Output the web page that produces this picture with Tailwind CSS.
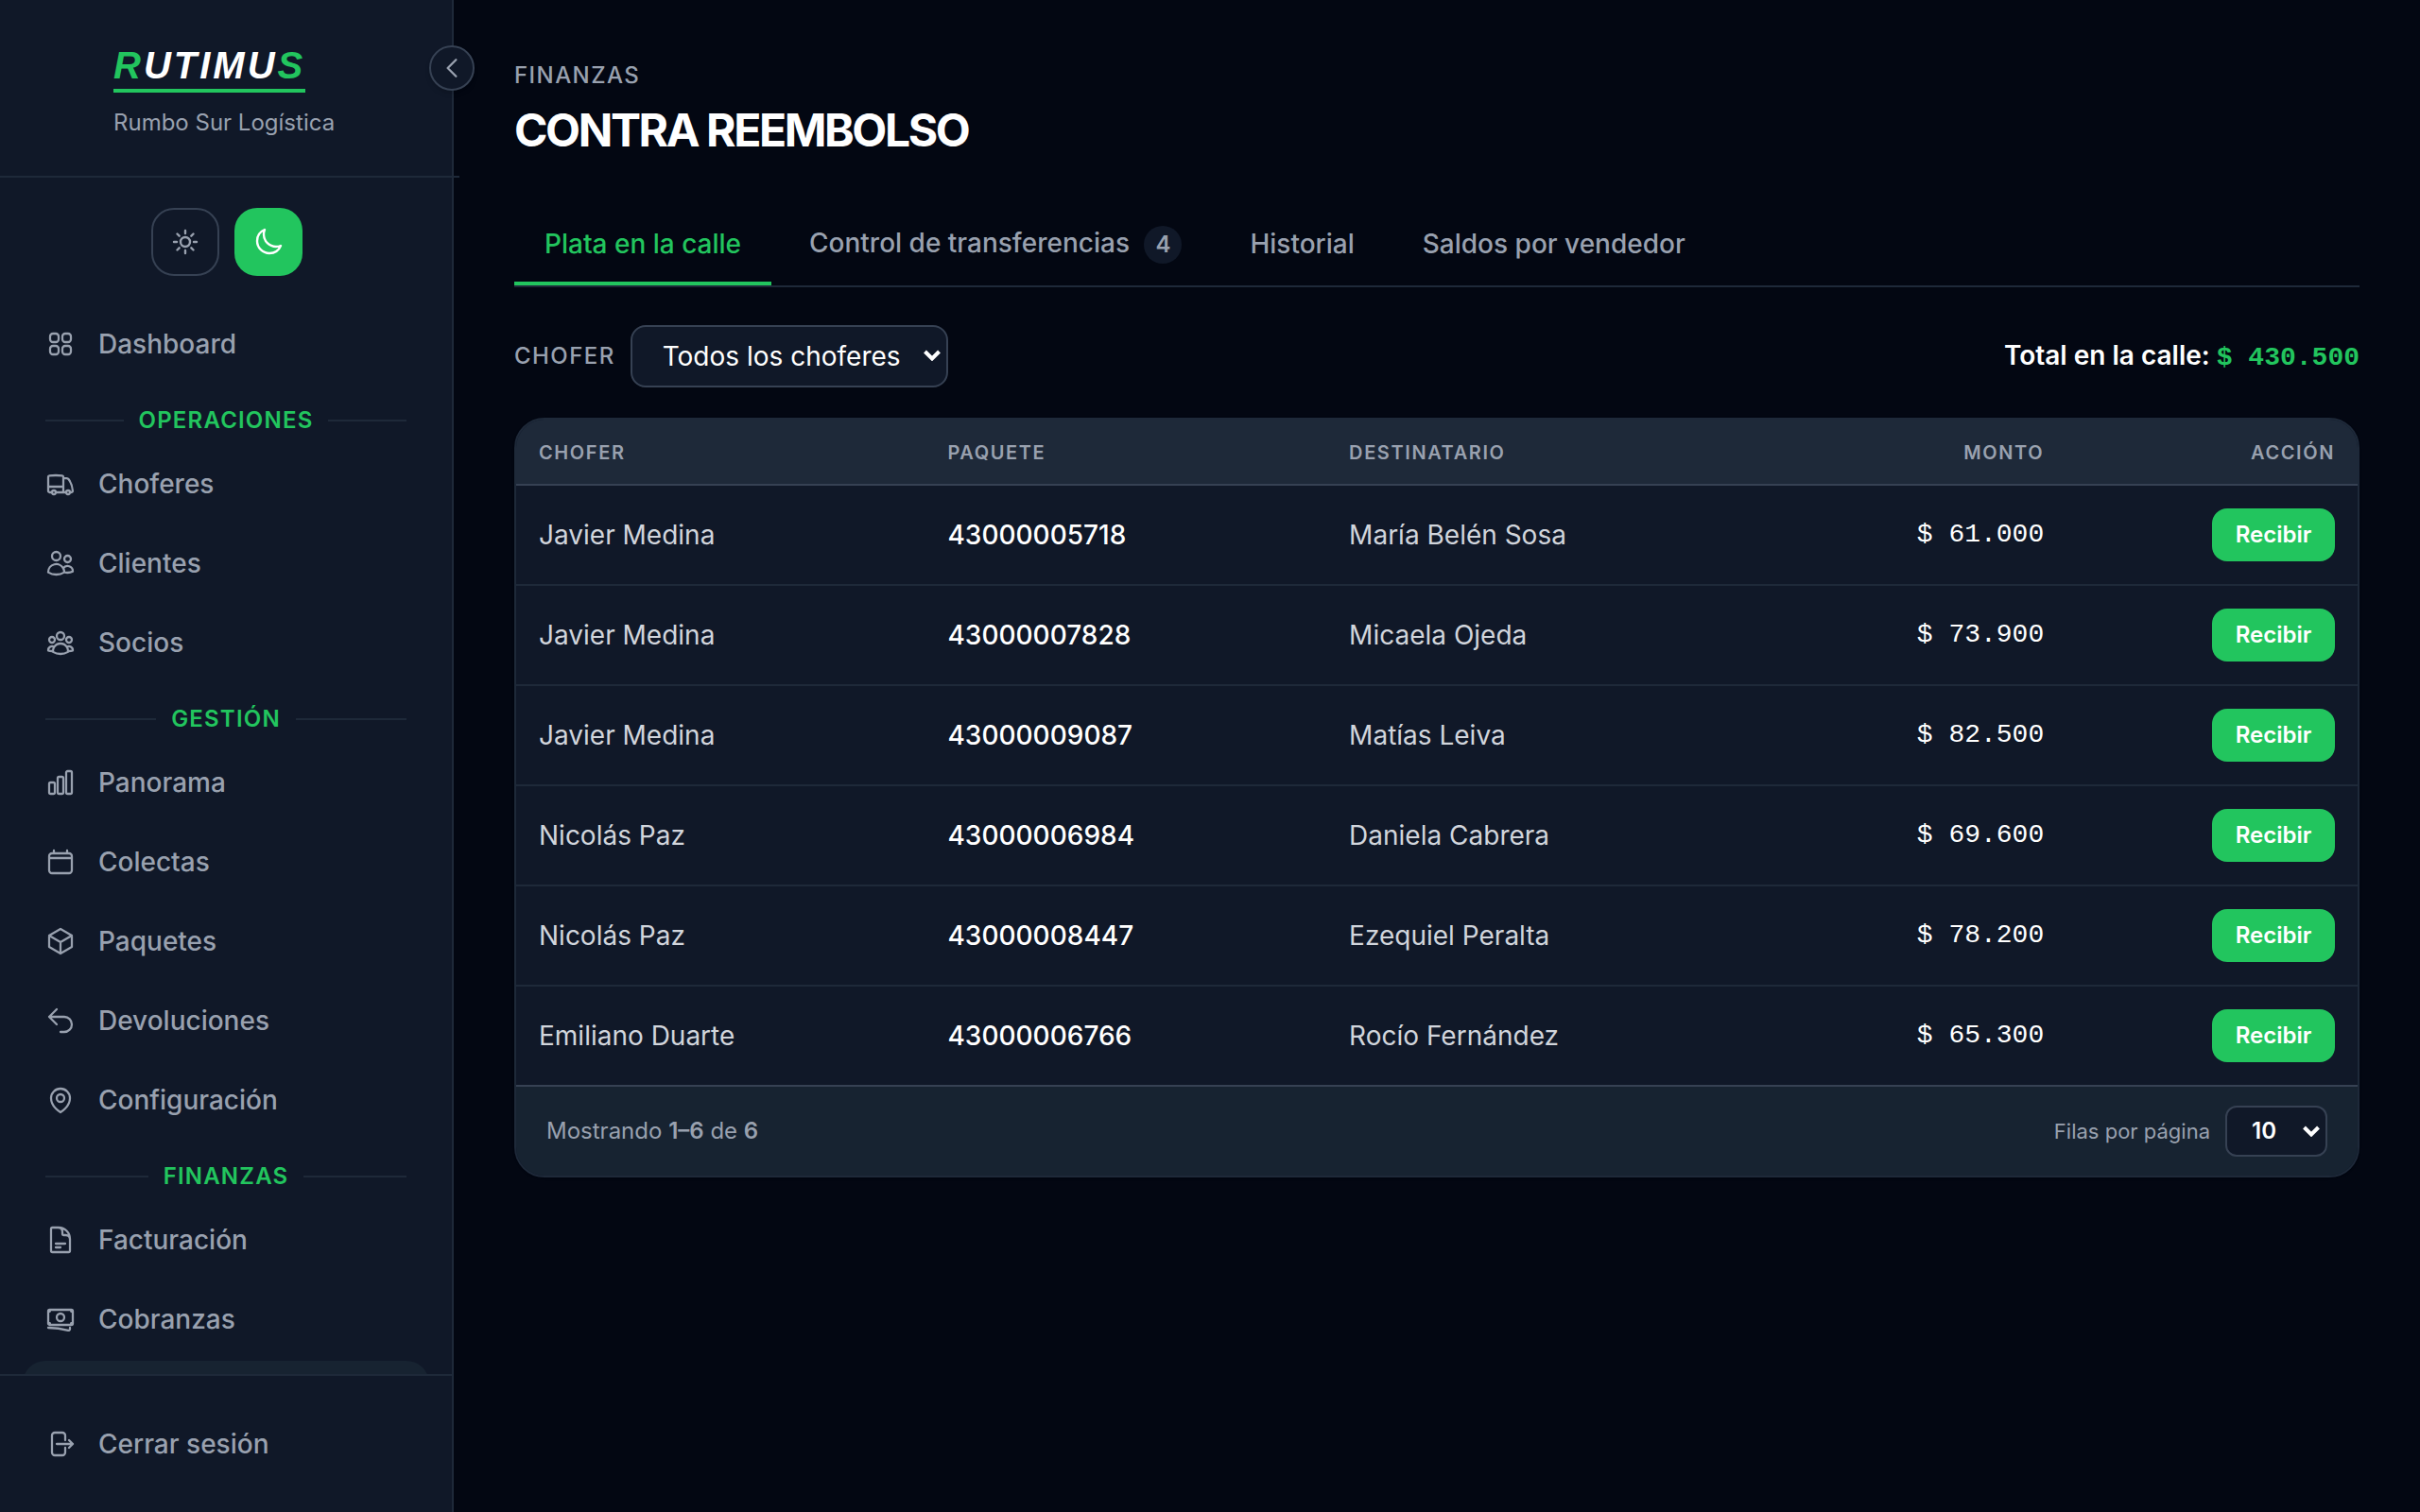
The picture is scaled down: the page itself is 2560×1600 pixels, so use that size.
<!DOCTYPE html>
<html lang="es">
<head>
  <meta charset="UTF-8">
  <meta name="viewport" content="width=device-width, initial-scale=1.0">
  <title>Rutimus - Contra reembolso</title>
  <script src="https://cdn.jsdelivr.net/npm/@tailwindcss/browser@4"></script>
</head>
<body class="flex h-screen overflow-hidden bg-gray-950 font-['Inter',sans-serif] text-[28px] leading-[40px] text-white">

  <!-- Sidebar -->
  <aside class="relative z-10 flex w-[480px] shrink-0 flex-col border-r-2 border-gray-800 bg-gray-900 text-gray-400">
    <div class="-mr-2 flex h-[188px] shrink-0 border-b-2 border-gray-800 pt-[46px] pl-30">
      <div class="flex flex-col items-start">
        <span class="border-b-4 border-[#22c55e] pb-[2px] font-['Liberation_Sans',sans-serif] text-[40px] leading-[46px] font-bold tracking-[3px] text-white italic"><span class="text-[#22c55e]">R</span>UTIMU<span class="text-[#22c55e]">S</span></span>
        <span class="mt-4 text-2xl leading-8">Rumbo Sur Logística</span>
      </div>
    </div>
    <button aria-label="Contraer menú" class="absolute top-12 -right-6 flex size-12 items-center justify-center rounded-full border-2 border-gray-700 bg-gray-900 shadow-md">
      <svg class="size-7" viewBox="0 0 24 24" fill="none" stroke="currentColor" stroke-width="2" stroke-linecap="round" stroke-linejoin="round"><path d="M15.75 19.5 8.25 12l7.5-7.5"/></svg>
    </button>

    <!-- Tema -->
    <div class="-mr-[2px] flex shrink-0 justify-center gap-4 pt-8 pb-4">
      <button aria-label="Tema claro" class="flex size-[72px] items-center justify-center rounded-3xl border-2 border-gray-700">
        <svg class="size-8" viewBox="0 0 24 24" fill="none" stroke="currentColor" stroke-width="1.8" stroke-linecap="round" stroke-linejoin="round"><path d="M12 3v2.25m6.364.386-1.591 1.591M21 12h-2.25m-.386 6.364-1.591-1.591M12 18.75V21m-4.773-4.227-1.591 1.591M5.25 12H3m4.227-4.773L5.636 5.636M15.75 12a3.75 3.75 0 1 1-7.5 0 3.75 3.75 0 0 1 7.5 0Z"/></svg>
      </button>
      <button aria-label="Tema oscuro" class="flex size-[72px] items-center justify-center rounded-3xl bg-[#22c55e] text-white">
        <svg class="size-8" viewBox="0 0 24 24" fill="none" stroke="currentColor" stroke-width="1.8" stroke-linecap="round" stroke-linejoin="round"><path d="M21.752 15.002A9.72 9.72 0 0 1 18 15.75c-5.385 0-9.75-4.365-9.75-9.75 0-1.33.266-2.597.748-3.752A9.753 9.753 0 0 0 3 11.25C3 16.635 7.365 21 12.75 21a9.753 9.753 0 0 0 9.002-5.998Z"/></svg>
      </button>
    </div>

    <nav class="flex min-h-0 flex-1 flex-col gap-1 overflow-hidden px-6 pt-4 font-medium">
      <a href="#" class="flex h-20 shrink-0 items-center gap-6 rounded-3xl px-6">
        <svg class="size-8" viewBox="0 0 24 24" fill="none" stroke="currentColor" stroke-width="1.7" stroke-linecap="round" stroke-linejoin="round"><path d="M3.75 6A2.25 2.25 0 0 1 6 3.75h2.25A2.25 2.25 0 0 1 10.5 6v2.25a2.25 2.25 0 0 1-2.25 2.25H6a2.25 2.25 0 0 1-2.25-2.25V6ZM3.75 15.75A2.25 2.25 0 0 1 6 13.5h2.25a2.25 2.25 0 0 1 2.25 2.25V18a2.25 2.25 0 0 1-2.25 2.25H6A2.25 2.25 0 0 1 3.75 18v-2.25ZM13.5 6a2.25 2.25 0 0 1 2.25-2.25H18A2.25 2.25 0 0 1 20.25 6v2.25A2.25 2.25 0 0 1 18 10.5h-2.25a2.25 2.25 0 0 1-2.25-2.25V6ZM13.5 15.75a2.25 2.25 0 0 1 2.25-2.25H18a2.25 2.25 0 0 1 2.25 2.25V18A2.25 2.25 0 0 1 18 20.25h-2.25A2.25 2.25 0 0 1 13.5 18v-2.25Z"/></svg>
        Dashboard
      </a>

      <div class="flex shrink-0 items-center gap-4 px-6 pt-5 pb-[6px] text-2xl leading-[34px] font-semibold tracking-wider text-[#22c55e]">
        <span class="h-[2px] flex-1 bg-gray-800"></span>OPERACIONES<span class="h-[2px] flex-1 bg-gray-800"></span>
      </div>
      <a href="#" class="flex h-20 shrink-0 items-center gap-6 rounded-3xl px-6">
        <svg class="size-8" viewBox="0 0 24 24" fill="none" stroke="currentColor" stroke-width="1.7" stroke-linecap="round" stroke-linejoin="round"><path d="M8.25 18.75a1.5 1.5 0 0 1-3 0m3 0a1.5 1.5 0 0 0-3 0m3 0h6m-9 0H3.375a1.125 1.125 0 0 1-1.125-1.125V14.25m17.25 4.5a1.5 1.5 0 0 1-3 0m3 0a1.5 1.5 0 0 0-3 0m3 0h1.125c.621 0 1.129-.504 1.09-1.124a17.902 17.902 0 0 0-3.213-9.193 2.056 2.056 0 0 0-1.58-.86H14.25M16.5 18.75h-2.25m0-11.177v-.958c0-.568-.422-1.048-.987-1.106a48.554 48.554 0 0 0-10.026 0 1.106 1.106 0 0 0-.987 1.106v7.635m12-6.677v6.677m0 4.5v-4.5m0 0h-12"/></svg>
        Choferes
      </a>
      <a href="#" class="flex h-20 shrink-0 items-center gap-6 rounded-3xl px-6">
        <svg class="size-8" viewBox="0 0 24 24" fill="none" stroke="currentColor" stroke-width="1.7" stroke-linecap="round" stroke-linejoin="round"><path d="M15 19.128a9.38 9.38 0 0 0 2.625.372 9.337 9.337 0 0 0 4.121-.952 4.125 4.125 0 0 0-7.533-2.493M15 19.128v-.003c0-1.113-.285-2.16-.786-3.07M15 19.128v.106A12.318 12.318 0 0 1 8.624 21c-2.331 0-4.512-.645-6.374-1.766l-.001-.109a6.375 6.375 0 0 1 11.964-3.07M12 6.375a3.375 3.375 0 1 1-6.75 0 3.375 3.375 0 0 1 6.75 0Zm8.25 2.25a2.625 2.625 0 1 1-5.25 0 2.625 2.625 0 0 1 5.25 0Z"/></svg>
        Clientes
      </a>
      <a href="#" class="flex h-20 shrink-0 items-center gap-6 rounded-3xl px-6">
        <svg class="size-8" viewBox="0 0 24 24" fill="none" stroke="currentColor" stroke-width="1.7" stroke-linecap="round" stroke-linejoin="round"><path d="M18 18.72a9.094 9.094 0 0 0 3.741-.479 3 3 0 0 0-4.682-2.72m.94 3.198.001.031c0 .225-.012.447-.037.666A11.944 11.944 0 0 1 12 21c-2.17 0-4.207-.576-5.963-1.584A6.062 6.062 0 0 1 6 18.719m12 0a5.971 5.971 0 0 0-.941-3.197m0 0A5.995 5.995 0 0 0 12 12.75a5.995 5.995 0 0 0-5.058 2.772m0 0a3 3 0 0 0-4.681 2.72 8.986 8.986 0 0 0 3.74.477m.94-3.197a5.971 5.971 0 0 0-.94 3.197M15 6.75a3 3 0 1 1-6 0 3 3 0 0 1 6 0Zm6 3a2.25 2.25 0 1 1-4.5 0 2.25 2.25 0 0 1 4.5 0Zm-13.5 0a2.25 2.25 0 1 1-4.5 0 2.25 2.25 0 0 1 4.5 0Z"/></svg>
        Socios
      </a>

      <div class="flex shrink-0 items-center gap-4 px-6 pt-5 pb-[6px] text-2xl leading-[34px] font-semibold tracking-wider text-[#22c55e]">
        <span class="h-[2px] flex-1 bg-gray-800"></span>GESTIÓN<span class="h-[2px] flex-1 bg-gray-800"></span>
      </div>
      <a href="#" class="flex h-20 shrink-0 items-center gap-6 rounded-3xl px-6">
        <svg class="size-8" viewBox="0 0 24 24" fill="none" stroke="currentColor" stroke-width="1.7" stroke-linecap="round" stroke-linejoin="round"><path d="M3 13.125C3 12.504 3.504 12 4.125 12h2.25c.621 0 1.125.504 1.125 1.125v6.75C7.5 20.496 6.996 21 6.375 21h-2.25A1.125 1.125 0 0 1 3 19.875v-6.75ZM9.75 8.625c0-.621.504-1.125 1.125-1.125h2.25c.621 0 1.125.504 1.125 1.125v11.25c0 .621-.504 1.125-1.125 1.125h-2.25a1.125 1.125 0 0 1-1.125-1.125V8.625ZM16.5 4.125c0-.621.504-1.125 1.125-1.125h2.25C20.496 3 21 3.504 21 4.125v15.75c0 .621-.504 1.125-1.125 1.125h-2.25a1.125 1.125 0 0 1-1.125-1.125V4.125Z"/></svg>
        Panorama
      </a>
      <a href="#" class="flex h-20 shrink-0 items-center gap-6 rounded-3xl px-6">
        <svg class="size-8" viewBox="0 0 24 24" fill="none" stroke="currentColor" stroke-width="1.7" stroke-linecap="round" stroke-linejoin="round"><path d="M6.75 3v2.25M17.25 3v2.25M3 18.75V7.5a2.25 2.25 0 0 1 2.25-2.25h13.5A2.25 2.25 0 0 1 21 7.5v11.25m-18 0A2.25 2.25 0 0 0 5.25 21h13.5A2.25 2.25 0 0 0 21 18.75m-18 0V9h18v9.75"/></svg>
        Colectas
      </a>
      <a href="#" class="flex h-20 shrink-0 items-center gap-6 rounded-3xl px-6">
        <svg class="size-8" viewBox="0 0 24 24" fill="none" stroke="currentColor" stroke-width="1.7" stroke-linecap="round" stroke-linejoin="round"><path d="m21 7.5-9-5.25L3 7.5m18 0-9 5.25m9-5.25v9l-9 5.25M3 7.5l9 5.25M3 7.5v9l9 5.25m0-9v9"/></svg>
        Paquetes
      </a>
      <a href="#" class="flex h-20 shrink-0 items-center gap-6 rounded-3xl px-6">
        <svg class="size-8" viewBox="0 0 24 24" fill="none" stroke="currentColor" stroke-width="1.7" stroke-linecap="round" stroke-linejoin="round"><path d="M9 15 3 9m0 0 6-6M3 9h12a6 6 0 0 1 0 12h-3"/></svg>
        Devoluciones
      </a>
      <a href="#" class="flex h-20 shrink-0 items-center gap-6 rounded-3xl px-6">
        <svg class="size-8" viewBox="0 0 24 24" fill="none" stroke="currentColor" stroke-width="1.7" stroke-linecap="round" stroke-linejoin="round"><path d="M15 10.5a3 3 0 1 1-6 0 3 3 0 0 1 6 0Z"/><path d="M19.5 10.5c0 7.142-7.5 11.25-7.5 11.25S4.5 17.642 4.5 10.5a7.5 7.5 0 1 1 15 0Z"/></svg>
        Configuración
      </a>

      <div class="flex shrink-0 items-center gap-4 px-6 pt-5 pb-[6px] text-2xl leading-[34px] font-semibold tracking-wider text-[#22c55e]">
        <span class="h-[2px] flex-1 bg-gray-800"></span>FINANZAS<span class="h-[2px] flex-1 bg-gray-800"></span>
      </div>
      <a href="#" class="flex h-20 shrink-0 items-center gap-6 rounded-3xl px-6">
        <svg class="size-8" viewBox="0 0 24 24" fill="none" stroke="currentColor" stroke-width="1.7" stroke-linecap="round" stroke-linejoin="round"><path d="M19.5 14.25v-2.625a3.375 3.375 0 0 0-3.375-3.375h-1.5A1.125 1.125 0 0 1 13.5 7.125v-1.5a3.375 3.375 0 0 0-3.375-3.375H8.25m0 12.75h7.5m-7.5 3H12M10.5 2.25H5.625c-.621 0-1.125.504-1.125 1.125v17.25c0 .621.504 1.125 1.125 1.125h12.75c.621 0 1.125-.504 1.125-1.125V11.25a9 9 0 0 0-9-9Z"/></svg>
        Facturación
      </a>
      <a href="#" class="flex h-20 shrink-0 items-center gap-6 rounded-3xl px-6">
        <svg class="size-8" viewBox="0 0 24 24" fill="none" stroke="currentColor" stroke-width="1.7" stroke-linecap="round" stroke-linejoin="round"><path d="M2.25 18.75a60.07 60.07 0 0 1 15.797 2.101c.727.198 1.453-.342 1.453-1.096V18.75M3.75 4.5v.75A.75.75 0 0 1 3 6h-.75m0 0v-.375c0-.621.504-1.125 1.125-1.125H20.25M2.25 6v9m18-10.5v.75c0 .414.336.75.75.75h.75m-1.5-1.5h.375c.621 0 1.125.504 1.125 1.125v9.75c0 .621-.504 1.125-1.125 1.125h-.375m1.5-1.5H21a.75.75 0 0 0-.75.75v.75m0 0H3.75m0 0h-.375a1.125 1.125 0 0 1-1.125-1.125V15m1.5 1.5v-.75A.75.75 0 0 0 3 15h-.75M15 10.5a3 3 0 1 1-6 0 3 3 0 0 1 6 0Z"/></svg>
        Cobranzas
      </a>
      <a href="#" aria-current="page" aria-label="Contra reembolso" class="h-20 shrink-0 rounded-3xl bg-[#172331]"></a>
    </nav>

    <div class="shrink-0 border-t-2 border-gray-800 px-6 py-8 font-medium">
      <a href="#" class="flex h-20 items-center gap-6 rounded-3xl px-6">
        <svg class="size-8" viewBox="0 0 24 24" fill="none" stroke="currentColor" stroke-width="1.7" stroke-linecap="round" stroke-linejoin="round"><path d="M15.75 9V5.25A2.25 2.25 0 0 0 13.5 3h-6a2.25 2.25 0 0 0-2.25 2.25v13.5A2.25 2.25 0 0 0 7.5 21h6a2.25 2.25 0 0 0 2.25-2.25V15m3 0 3-3m0 0-3-3m3 3H9"/></svg>
        Cerrar sesión
      </a>
    </div>
  </aside>

  <!-- Contenido -->
  <main class="min-w-0 flex-1 overflow-y-auto px-16 pt-16">
    <p class="text-2xl leading-8 font-medium tracking-[0.06em] text-gray-400">FINANZAS</p>
    <h1 class="mt-3 text-5xl leading-[60px] font-bold tracking-tighter">CONTRA REEMBOLSO</h1>

    <div role="tablist" class="mt-12 flex gap-2 border-b-2 border-gray-800 font-medium text-gray-400">
      <button role="tab" aria-selected="true" class="border-b-4 border-[#22c55e] px-8 pt-[21px] pb-[19px] text-[#22c55e]">Plata en la calle</button>
      <button role="tab" class="border-b-4 border-transparent px-8 pt-[21px] pb-[19px]">Control de transferencias <span class="ml-2 inline-block rounded-full bg-gray-900 px-3 py-1 text-2xl leading-8 font-semibold">4</span></button>
      <button role="tab" class="border-b-4 border-transparent px-8 pt-[21px] pb-[19px]">Historial</button>
      <button role="tab" class="border-b-4 border-transparent px-8 pt-[21px] pb-[19px]">Saldos por vendedor</button>
    </div>

    <div class="mt-10 flex items-center justify-between">
      <div class="flex items-center gap-4">
        <label for="chofer" class="text-2xl leading-8 font-medium tracking-[0.06em] text-gray-400">CHOFER</label>
        <div class="relative">
          <select id="chofer" class="h-[66px] appearance-none rounded-2xl border-2 border-gray-700 bg-gray-900 pr-12 pl-8">
            <option>Todos los choferes</option>
            <option>Javier Medina</option>
            <option>Nicolás Paz</option>
            <option>Emiliano Duarte</option>
          </select>
          <svg class="pointer-events-none absolute top-[26px] right-2 h-3 w-[18px]" viewBox="0 0 18 12" fill="none" stroke="currentColor" stroke-width="4"><path d="M1.5 2 9 9.5 16.5 2"/></svg>
        </div>
      </div>
      <p class="font-semibold">Total en la calle: <span class="font-['Liberation_Mono',monospace] text-[#22c55e]">$ 430.500</span></p>
    </div>

    <div class="mt-8 overflow-hidden rounded-[32px] border-2 border-gray-800 bg-gray-900 shadow-sm">
      <table class="w-full table-fixed text-left">
        <thead class="bg-gray-800 text-xl leading-[30px] tracking-[0.08em] text-gray-400">
          <tr class="border-b-2 border-gray-700">
            <th class="w-[22.2%] px-6 pt-5 pb-[18px] font-semibold">CHOFER</th>
            <th class="w-[21.8%] px-6 pt-5 pb-[18px] font-semibold">PAQUETE</th>
            <th class="px-6 pt-5 pb-[18px] font-semibold">DESTINATARIO</th>
            <th class="w-[15%] px-6 pt-5 pb-[18px] text-right font-semibold">MONTO</th>
            <th class="w-[15.8%] px-6 pt-5 pb-[18px] text-right font-semibold">ACCIÓN</th>
          </tr>
        </thead>
        <tbody id="filas" class="divide-y-2 divide-gray-800 text-gray-300"></tbody>
      </table>
      <div class="flex items-center justify-between border-t-2 border-gray-700 bg-[#172331] px-8 py-5 text-2xl leading-8 text-gray-400">
        <p>Mostrando <span class="font-semibold">1–6</span> de <span class="font-semibold">6</span></p>
        <div class="flex items-center gap-4">
          <label for="por-pagina" class="text-[22px]">Filas por página</label>
          <div class="relative">
            <select id="por-pagina" class="h-[54px] w-[108px] appearance-none rounded-xl border-2 border-gray-700 bg-gray-900 pl-[26px] font-semibold text-white">
              <option>10</option>
              <option>25</option>
              <option>50</option>
            </select>
            <svg class="pointer-events-none absolute top-[21px] right-2 h-3 w-[18px] text-white" viewBox="0 0 18 12" fill="none" stroke="currentColor" stroke-width="4"><path d="M1.5 2 9 9.5 16.5 2"/></svg>
          </div>
        </div>
      </div>
    </div>
  </main>

  <script>
    const envios = [
      ['Javier Medina', '43000005718', 'María Belén Sosa', '61.000'],
      ['Javier Medina', '43000007828', 'Micaela Ojeda', '73.900'],
      ['Javier Medina', '43000009087', 'Matías Leiva', '82.500'],
      ['Nicolás Paz', '43000006984', 'Daniela Cabrera', '69.600'],
      ['Nicolás Paz', '43000008447', 'Ezequiel Peralta', '78.200'],
      ['Emiliano Duarte', '43000006766', 'Rocío Fernández', '65.300'],
    ];

    document.getElementById('filas').innerHTML = envios.map(([chofer, paquete, destinatario, monto]) => `
      <tr>
        <td class="px-6 py-6">${chofer}</td>
        <td class="px-6 py-6 font-medium text-white">${paquete}</td>
        <td class="px-6 py-6">${destinatario}</td>
        <td class="px-6 py-6 text-right font-['Liberation_Mono',monospace] text-white">$ ${monto}</td>
        <td class="px-6 py-6 text-right"><button class="block ml-auto h-14 w-[130px] rounded-2xl bg-[#22c55e] text-2xl leading-8 font-semibold text-white">Recibir</button></td>
      </tr>`).join('');
  </script>

</body>
</html>
